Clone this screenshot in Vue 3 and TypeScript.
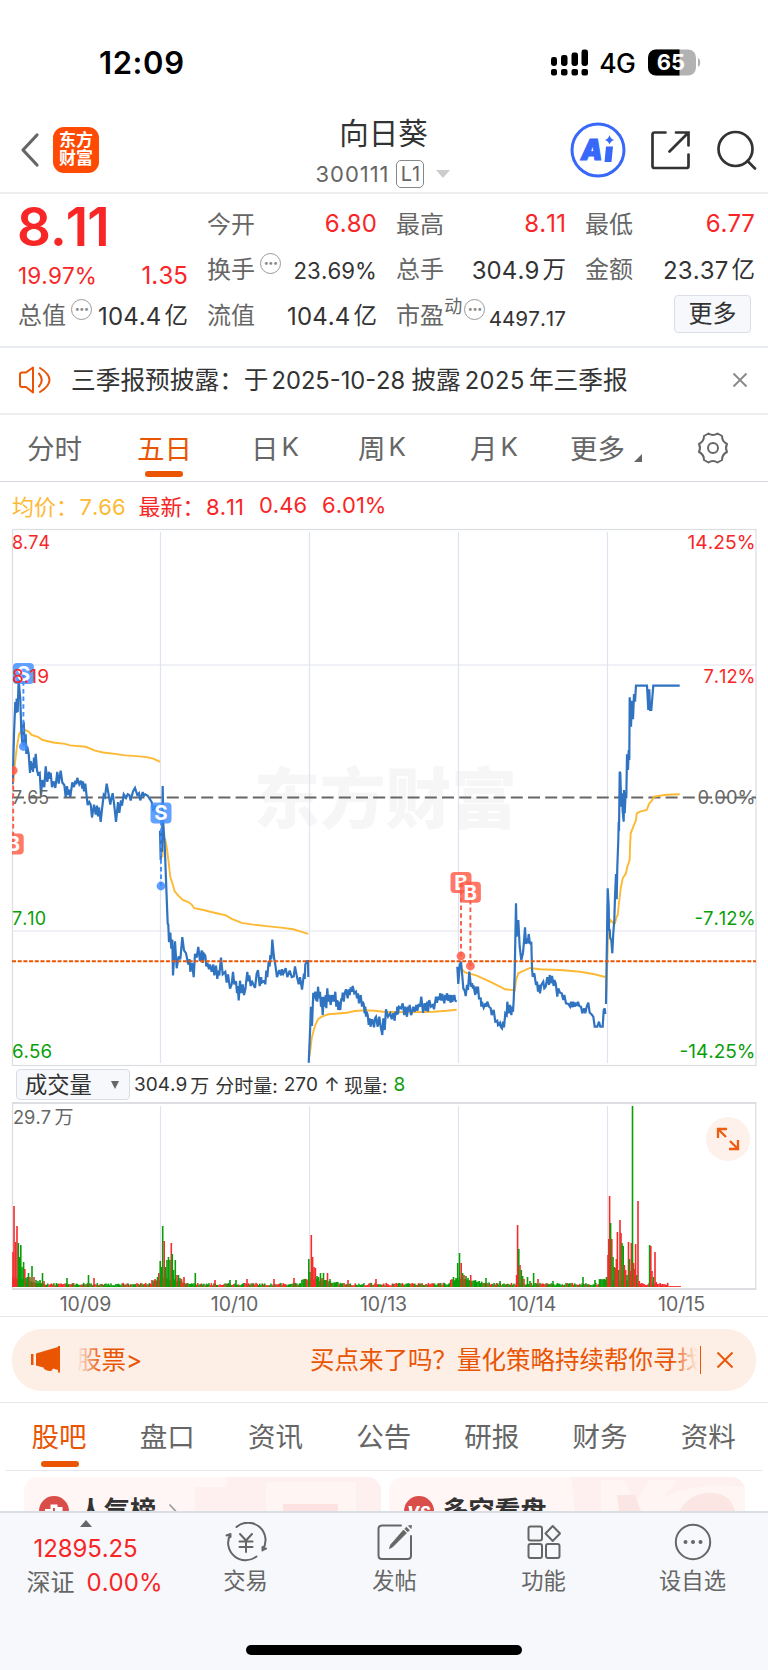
<script setup lang="ts">
type Point = [number, number]
interface Frame { ox: number; oy: number; sx: number; sy: number }

const early: Frame = { ox: 0, oy: 520, sx: 3, sy: 2.8 }
const middle: Frame = { ox: 300, oy: 740, sx: 3, sy: 3 }
const late: Frame = { ox: 450, oy: 640, sx: 3, sy: 3 }

function parse(frame: Frame, data: string): Point[] {
  return data.trim().split(/\s+/).map((pair) => {
    const [x, y] = pair.split(',').map(Number)
    return [frame.ox + x / frame.sx, frame.oy + y / frame.sy] as Point
  })
}
function line(points: Point[]): string {
  return 'M' + points.map(([x, y]) => `${x.toFixed(1)} ${y.toFixed(1)}`).join('L')
}

const prices: string[] = [
  line(parse(early, '38,740 42,600 46,510 48,540 50,500 53,538 56,440 58,470 61,500 64,590 67,625 69,590 71,565 74,630 77,600 79,655 82,635 86,655 90,708 92,675 95,700 97,680 99,705 102,665 104,695 107,655 111,700 114,712 119,708 123,770 127,728 130,742 133,748 137,690 142,733 147,705 149,725 152,708 156,748 161,732 166,750 172,705 176,738 182,702 187,735 193,742 197,775 201,745 205,770 208,755 211,775 217,735 222,748 226,730 229,740 232,722 238,740 243,730 247,752 249,732 252,760 256,738 260,775 263,798 268,790 272,797 276,833 282,797 287,825 291,800 294,830 297,805 302,845 306,810 311,770 315,775 320,738 326,770 331,797 334,780 338,765 343,800 348,845 354,790 358,820 363,785 366,800 371,768 378,778 383,768 388,770 392,785 399,760 405,750 412,770 417,765 421,785 428,762 432,772 436,768 443,772 450,782 455,790 460,815 465,800 470,820 475,805 480,820')),
  line(parse(early, '480,870 482,952 484,880 486,930 488,745 490,850 492,880 494,910 497,985 500,1060 503,1130 505,1133 507,1182 511,1155 514,1200 517,1175 519,1275 525,1180 530,1255 536,1222 541,1230 547,1168 552,1205 558,1213 565,1245 569,1230 571,1265 576,1240 581,1280 585,1215 590,1225 595,1195 600,1235 605,1205 608,1240 612,1215 616,1220 619,1250 622,1240 627,1258 630,1245 635,1265 640,1245 643,1275 648,1248 652,1285 655,1262 658,1275 663,1225 668,1272 676,1265 680,1295 684,1272 690,1312 695,1300 699,1265 703,1300 708,1292 711,1325 713,1305 716,1345 720,1290 724,1325 728,1300 732,1330 736,1315 742,1265 745,1292 748,1275 752,1305 755,1290 760,1300 765,1310 770,1270 774,1260 779,1305 783,1280 786,1295 793,1290 796,1300 799,1262 802,1280 806,1235 809,1250 811,1218 814,1230 817,1175 822,1225 826,1245 831,1280 838,1260 843,1275 846,1258 850,1270 857,1255 862,1280 869,1262 875,1280 881,1278 885,1250 891,1280 896,1300 900,1280 906,1315 912,1270 914,1285 916,1245 921,1235 924,1235 925,1280')),
  line(parse(middle, '26,968 29,900 33,800 36,858 40,758 43,775 46,755 48,782 50,755 52,785 54,740 58,775 60,755 63,800 65,770 68,825 71,770 74,800 77,765 79,805 82,745 85,785 88,765 92,795 95,765 98,785 101,765 103,785 106,755 109,800 112,780 115,810 118,785 121,810 124,775 126,780 128,758 131,785 134,760 138,748 143,775 146,748 149,765 152,742 155,755 158,738 163,760 168,755 171,775 174,760 177,790 182,765 186,800 188,785 191,792 194,820 196,800 198,830 200,815 203,825 206,855 208,835 212,860 214,840 217,840 222,862 225,835 228,830 233,860 238,830 242,860 247,885 250,835 254,870 258,808 264,830 271,820 275,838 280,820 284,842 286,815 290,825 292,800 294,822 297,800 303,805 308,790 313,825 316,800 321,830 324,800 326,815 329,795 333,825 335,820 340,800 344,815 349,795 352,812 356,792 360,800 364,770 369,818 374,790 378,812 382,785 384,815 388,780 393,800 398,795 402,808 408,770 411,788 414,770 417,780 421,760 424,782 427,762 433,790 436,765 439,780 441,760 445,782 448,765 452,788 455,765 457,785 463,765 466,782 470,785')),
  line([
    ...parse(middle, '472,680 475,732 479,675 483,665 487,708 490,745 494,752 497,768 501,735 504,750 508,695 513,740 516,730 518,742 521,740 526,765 528,740 531,760 534,740 537,775 542,775 544,800 546,785 551,803 557,790 559,800 562,785 567,800 572,805 575,825 581,810 586,845 592,842 594,855 600,848 602,860 606,865 609,845 612,862 616,820 620,825 622,785 626,820 630,795 634,825 637,800 639,815 641,780 644,700 646,600 648,490 650,590 653,560 655,540 659,620 664,660 669,638 672,605 675,562 678,612 681,595 683,610 686,582 690,612 694,605 696,685'),
    ...parse(late, '248,1010 253,1000 258,1035 261,1025 264,1055 267,1035 270,1060 274,1035 280,1025 283,1045 287,1040 292,1012 297,1035 299,1005 302,1030 306,1008 311,1038 313,1020 317,1030 322,1070 325,1045 330,1058 335,1060 340,1080 343,1065 348,1090 355,1092 360,1100 363,1085 367,1102 370,1085 374,1100 378,1088 381,1098 384,1085 388,1098 393,1100 397,1120 402,1105 406,1120 410,1100 415,1088 419,1118 424,1122 430,1130 434,1160 442,1160 447,1145 451,1160 458,1160 461,1110 464,1105 466,1122'),
  ]),
  line(parse(late, '468,1092 470,950 473,745 476,800 477,870 479,870 481,895 484,900 487,940 490,880 493,840 495,770 498,702 500,778 502,680 505,600 506,545 507,572 509,395 511,400 514,500 516,460 518,515 521,545 522,450 524,520 527,455 529,475 531,343 534,390 536,330 538,360 539,172 541,200 543,260 546,182 549,238 552,162 555,185 558,137 591,137 595,210 598,148 600,210 604,210 610,137 689,137')),
]

const averages: string[] = [
  line(parse(early, '40,735 45,680 50,640 57,600 64,590 75,588 85,592 95,602 115,608 128,616 160,623 195,627 210,631 257,635 285,646 310,651 345,655 375,659 410,661 440,664 460,668 480,677')),
  line(parse(early, '487,945 490,900 496,895 500,915 506,960 511,1000 518,1020 524,1040 535,1052 548,1064 565,1070 575,1077 583,1087 610,1092 640,1099 678,1107 695,1117 725,1128 760,1133 800,1137 850,1142 880,1146 905,1153 925,1159')),
  line(parse(middle, '28,950 31,930 35,895 40,875 46,855 54,838 65,830 85,823 105,821 140,818 165,813 195,811 225,812 250,815 280,816 330,817 400,815 440,812 470,809')),
  line(parse(late, '33,985 45,997 60,1001 80,1007 100,1016 120,1025 150,1040 165,1048 195,1051 198,1020 205,1000 215,995 240,984 270,988 330,990 390,995 430,1002 466,1011')),
  line(parse(late, '469,1060 474,900 478,850 482,840 490,850 495,850 500,830 503,825 508,780 512,745 518,715 528,700 532,680 539,660 540,620 542,580 550,560 558,540 560,520 570,515 590,510 598,490 605,483 612,470 625,468 650,464 689,463')),
]

interface Bar { x: number; h: number; up: boolean }
const peaks = '13,35,r 14,81,r 15.5,45,r 17,61,r 18.3,44,g 19.6,30,g 20.8,42,g 22,20,g 23.6,25,g 24.8,18,r 26,9,g 27.3,10,g 28.5,14,g 30,10,r 32,21,g 34,10,r 36,7,g 38,6,g 40,7,g 42.5,14,g 44,6,r 67,9,g 88.5,12,g 94,9,r 152,7,r 155,8,r 157.5,10,g 158.8,14,r 160.2,26,g 161.5,20,g 162.7,61,g 164.2,46,r 165.6,20,g 167,27,g 168.5,30,g 170,27,g 171.3,44,r 172.3,33,g 173.5,17,g 175.3,27,g 177,12,r 178.5,12,g 180,9,g 181.5,8,r 184,10,r 195.3,14,g 215,7,r 230,7,g 236,7,g 247,8,r 274,8,r 294,9,r 305,8,g 308.8,28,g 310,15,g 311.3,52,r 312.6,30,r 314,20,r 315.4,19,r 317,11,g 318.5,10,g 320.5,14,g 322,9,r 323.5,14,g 327.5,14,r 330,8,g 348,7,r 376,8,r 453.5,10,g 456,9,g 457.7,24,g 459.5,34,g 461.2,24,r 462.6,14,g 464,12,r 466,11,g 468,9,g 470.7,12,r 486,9,g 500,6,g 516.6,12,r 517.6,62,r 518.8,38,g 520,22,r 521.3,17,g 522.6,11,g 524,8,r 527.5,10,g 530,6,g 533.6,14,g 538,8,r 553,6,g 583,10,g 595,7,g 606.5,10,g 608,32,r 608.8,48,r 609.6,91,r 610.6,64,g 611.8,48,r 613,30,g 614.2,20,g 615.5,19,r 616.4,28,r 617.4,55,r 618.7,17,g 620,67,r 621,54,r 622,44,g 623.2,41,g 624.4,22,r 625.6,17,r 627,12,g 628.5,45,r 629.5,28,g 630.5,16,r 631.3,44,r 632.5,181,g 633.6,24,r 634.7,18,r 635.6,43,r 636.8,12,g 638,86,r 639.3,6,r 649.6,42,g 650.8,41,r 652,16,r 653.4,10,g 655,35,r 656.2,5,r'

function volumeBars(): Bar[] {
  const bars: Bar[] = []
  let seed = 29
  for (let x = 13; x < 681; x += 1.24) {
    seed = (seed * 1103515245 + 12345) % 2147483648
    const level = seed / 2147483648
    const phase = ((x - 12) % 149) / 149
    const boost = phase < 0.22 ? 6 * (1 - phase / 0.22) : phase > 0.94 ? 4 : 0
    const h = x > 668 ? 0.9 : 1.6 + level * 2.6 + (x > 657 ? 0 : boost)
    bars.push({ x, h, up: (seed >> 9) % 5 < 2 || x > 640 })
  }
  for (const item of peaks.split(' ')) {
    const [x, h, tone] = item.split(',')
    bars.push({ x: Number(x), h: Number(h), up: tone === 'r' })
  }
  return bars
}
const bars = volumeBars()

const verticals = [160.5, 309.5, 458.5, 607.5]
const leftLabels = [
  { text: '8.74', y: 548.5, w: 38, tone: 'up' },
  { text: '8.19', y: 683, w: 37, tone: 'up' },
  { text: '7.65', y: 803.5, w: 37, tone: 'flat' },
  { text: '7.10', y: 925, w: 34, tone: 'down' },
  { text: '6.56', y: 1058, w: 40, tone: 'down' },
]
const rightLabels = [
  { text: '14.25%', y: 548.5, w: 68, tone: 'up' },
  { text: '7.12%', y: 683, w: 52, tone: 'up' },
  { text: '0.00%', y: 803.5, w: 58, tone: 'flat' },
  { text: '-7.12%', y: 925, w: 61, tone: 'down' },
  { text: '-14.25%', y: 1058, w: 76, tone: 'down' },
]
const markers = [
  { kind: 'S', x: 23.4, y: 673.5, end: 746.5 },
  { kind: 'S', x: 161, y: 813, end: 886 },
  { kind: 'B', x: 13.2, y: 844, end: 770.5 },
  { kind: 'B', x: 461, y: 882.5, end: 956 },
  { kind: 'B', x: 470.4, y: 892.2, end: 966 },
]
const dates = ['10/09', '10/10', '10/13', '10/14', '10/15']
const infoTabs = ['股吧', '盘口', '资讯', '公告', '研报', '财务', '资料']
</script>

<template>
  <main class="app">
    <div class="status">
      <span class="clock">12:09</span>
      <svg class="signal" width="38" height="27" viewBox="0 0 38 27">
        <g fill="#000">
          <rect x="0" y="8" width="6" height="9" rx="2.4" /><rect x="10" y="6" width="6.5" height="11" rx="2.4" />
          <rect x="20.5" y="3.5" width="6.5" height="13.5" rx="2.4" /><rect x="30.5" y="0.5" width="6.5" height="16.5" rx="2.4" />
          <rect x="0" y="20" width="6" height="6.5" rx="2" /><rect x="10" y="20" width="6.5" height="6.5" rx="2" />
          <rect x="20.5" y="20" width="6.5" height="6.5" rx="2" /><rect x="30.5" y="20" width="6.5" height="6.5" rx="2" />
        </g>
      </svg>
      <span class="network">4G</span>
      <svg class="battery" width="53" height="27" viewBox="0 0 53 27">
        <rect x="0" y="0.5" width="48" height="26" rx="8" fill="#b2b2b2" />
        <path d="M8 .5H31.5V26.5H8A8 8 0 0 1 0 18.500V8.500A8 8 0 0 1 8 .5Z" fill="#000" />
        <path d="M50 9C53 10.500 53 16.500 50 18Z" fill="#b2b2b2" />
        <text x="23" y="21.300" text-anchor="middle" font-size="22" font-weight="700" fill="#fff">65</text>
      </svg>
    </div>

    <header class="header">
      <svg class="back" width="20" height="36" viewBox="0 0 20 36"><path d="M17 3 3 18 17 33" fill="none" stroke="#666" stroke-width="3.200" stroke-linecap="round" stroke-linejoin="round" /></svg>
      <div class="logo"><span>东方</span><span>财富</span></div>
      <div class="title">
        <h1>向日葵</h1>
        <div class="code"><span>300111</span><b>L1</b><i></i></div>
      </div>
      <svg class="ai" width="56" height="56" viewBox="0 0 56 56">
        <circle cx="28" cy="28" r="26" fill="none" stroke="#3768fa" stroke-width="3" />
        <text class="ai-letter" x="11" y="38" textLength="21.500" lengthAdjust="spacingAndGlyphs">A</text>
        <path d="M36 24.500H43L41.500 40H34.500Z" fill="#3768fa" />
        <path d="M39.500 13Q40.500 17 44 18Q40.500 19 39.500 22.500Q38.500 19 35 18Q38.500 17 39.500 13Z" fill="#3768fa" />
      </svg>
      <svg class="share" width="42" height="42" viewBox="0 0 42 42" fill="none" stroke="#333" stroke-width="2.700" stroke-linecap="round">
        <path d="M15.500 3.500H4.500Q2.500 3.500 2.500 5.500V37Q2.500 39 4.500 39H36.500Q38.500 39 38.500 37V25.500M26 3.500H38.500V16.500M38 4 19.500 22.500" />
      </svg>
      <svg class="search" width="42" height="42" viewBox="0 0 42 42" fill="none" stroke="#333" stroke-width="2.700" stroke-linecap="round">
        <circle cx="19.500" cy="20" r="17" /><path d="M31.500 32 39 39.500" />
      </svg>
    </header>

    <section class="quote">
      <div class="cell"><strong>8.11</strong></div>
      <div class="cell top"><label>今开</label><span class="up">6.80</span></div>
      <div class="cell top"><label>最高</label><span class="up">8.11</span></div>
      <div class="cell top"><label>最低</label><span class="up">6.77</span></div>
      <div class="cell change"><span class="up pct">19.97%</span><span class="up">1.35</span></div>
      <div class="cell second"><label>换手<em class="tip">•••</em></label><span class="mid">23.69%</span></div>
      <div class="cell second"><label>总手</label><span>304.9<u>万</u></span></div>
      <div class="cell second"><label>金额</label><span>23.37<u>亿</u></span></div>
      <div class="cell"><label>总值<em class="tip">•••</em></label><span>104.4<u>亿</u></span></div>
      <div class="cell"><label>流值</label><span>104.4<u>亿</u></span></div>
      <div class="cell"><label>市盈<sup>动</sup><em class="tip tight">•••</em></label><span class="small">4497.17</span></div>
      <div class="cell last"><button class="more">更多</button></div>
    </section>

    <section class="notice">
      <svg width="34" height="30" viewBox="0 0 34 30" fill="none" stroke="#ea5504" stroke-width="2" stroke-linejoin="round" stroke-linecap="round">
        <path d="M15 2.500V27.500L8 22H4Q2 22 2 20V9.500Q2 7.500 4 7.500H8Z" /><path d="M21 8.500Q26.500 15 21 21.500M22 3Q41 15 22 27" />
      </svg>
      <p>三季报预披露：于<span>2025-10-28</span>披露<span class="year">2025</span>年三季报</p>
      <svg width="16" height="16" viewBox="0 0 16 16"><path d="M1.500 1.500 14.500 14.500M14.500 1.500 1.500 14.500" stroke="#888" stroke-width="1.800" /></svg>
    </section>

    <nav class="periods">
      <span>分时</span><span class="active">五日</span><span>日<b>K</b></span><span>周<b>K</b></span><span>月<b>K</b></span>
      <span class="drop">更多<i></i></span>
      <svg width="34" height="34" viewBox="0 0 34 34" fill="none" stroke="#666" stroke-width="2">
        <path d="M12.500 2.500Q17 5.500 21.500 2.500L26 5Q26 10.500 31 13Q29 17 31 21Q26 23.500 26 29L21.500 31.500Q17 28.500 12.500 31.500L8 29Q8 23.500 3 21Q5 17 3 13Q8 10.500 8 5Z" stroke-linejoin="round" /><circle cx="17" cy="17" r="5" />
      </svg>
    </nav>

    <p class="legend"><span class="avg">均价：<b>7.66</b></span><span>最新：<b>8.11</b></span><b>0.46</b><b>6.01%</b></p>

    <svg class="chart" width="768" height="543" viewBox="0 524 768 543">
      <defs><clipPath id="plot"><rect x="12" y="529" width="744.500" height="537" /></clipPath></defs>
      <text class="watermark" x="254" y="823" textLength="263" lengthAdjust="spacingAndGlyphs">东方财富</text>
      <g stroke="#dfe3ef" stroke-width="1.200" fill="none">
        <rect x="12.500" y="529.500" width="743.500" height="536" stroke="#dadde2" />
        <path v-for="x in verticals" :key="x" :d="`M${x} 532V1063`" />
        <path d="M12 665H756M12 931H756" />
      </g>
      <path d="M12 797.500H756" stroke="#666" stroke-width="2" stroke-dasharray="12 5.200" />
      <g clip-path="url(#plot)" fill="none" stroke-linejoin="miter" stroke-miterlimit="3">
        <path v-for="d in averages" :key="d" :d="d" stroke="#fdb933" stroke-width="1.900" />
        <path v-for="d in prices" :key="d" :d="d" stroke="#2f73c1" stroke-width="2.200" />
        <path d="M12 961.300H756" stroke="#ea5504" stroke-width="2" stroke-dasharray="4 1.700" />
        <g v-for="m in markers" :key="m.x" :class="m.kind === 'S' ? 'sell' : 'buy'">
          <path class="stem" :d="`M${m.x} ${m.y}V${m.end}`" />
          <circle :cx="m.x" :cy="m.end" r="4.400" />
          <rect :x="m.x - 10.500" :y="m.y - 10.500" width="21" height="21" rx="4" />
          <text :x="m.x" :y="m.y + 7.300" text-anchor="middle">{{ m.kind }}</text>
        </g>
      </g>
      <g class="axis">
        <text v-for="l in leftLabels" :key="l.text" x="12" :y="l.y" :textLength="l.w" lengthAdjust="spacingAndGlyphs" :class="l.tone">{{ l.text }}</text>
        <text v-for="l in rightLabels" :key="l.text" :x="755.500 - l.w" :y="l.y" :textLength="l.w" lengthAdjust="spacingAndGlyphs" :class="l.tone">{{ l.text }}</text>
      </g>
    </svg>

    <div class="volume-head">
      <button>成交量<i></i></button>
      <p>304.9<u>万</u><span>分时量:</span><span>270</span><span>↑</span><span class="now">现量:</span><span class="down">8</span></p>
    </div>

    <div class="volume">
      <svg width="768" height="188" viewBox="0 1102 768 188">
        <g stroke="#dfe3ef" stroke-width="1.200" fill="none">
          <path v-for="x in verticals" :key="x" :d="`M${x} 1106V1287`" />
          <path d="M12.500 1103V1288M755.800 1103V1288" stroke="#dadde2" />
          <path d="M12 1103H756.500M12 1289H756.500" stroke="#dcdee2" stroke-width="2" />
        </g>
        <rect v-for="(b, i) in bars" :key="i" :x="b.x - 0.800" :y="1287 - b.h" width="1.600" :height="b.h" :fill="b.up ? '#f62c2c' : '#0a9d08'" />
        <text class="volume-max" x="13" y="1124" textLength="38" lengthAdjust="spacingAndGlyphs">29.7</text>
        <text class="volume-max" x="54.500" y="1124" font-size="18">万</text>
      </svg>
      <div class="expand">
        <svg width="24" height="24" viewBox="0 0 24 24" fill="none" stroke="#ee5c10" stroke-width="2.300"><path d="M2 11V2H11M2.500 2.500 10 10M22 13V22H13M21.500 21.500 14 14" /></svg>
      </div>
    </div>
    <div class="dates"><span v-for="d in dates" :key="d">{{ d }}</span></div>

    <section class="promo">
      <svg width="30" height="28" viewBox="0 0 30 28" fill="#ea5504"><path d="M0 8H2.500V19H0ZM5 7.500 27 1V0H29V26.500H27V24L22 22.500Q21 25.500 18.500 25Q13 24 12.500 21.500L5 19.500Z" /></svg>
      <div class="ticker"><span>股票&gt;</span><span>买点来了吗？量化策略持续帮你寻找</span></div>
      <svg class="promo-close" width="18" height="18" viewBox="0 0 18 18"><path d="M1.500 1.500 16.500 16.500M16.500 1.500 1.500 16.500" stroke="#ea5504" stroke-width="1.900" /></svg>
    </section>

    <nav class="info-tabs"><span v-for="(t, i) in infoTabs" :key="t" :class="{ active: i === 0 }">{{ t }}</span></nav>

    <section class="cards">
      <article>
        <svg width="30" height="30" viewBox="0 0 30 30"><circle cx="15" cy="15" r="15" fill="#da4e49" /><path d="M6 13H11.500V8.500H18.500V11H23.500V25H6Z" fill="#fff" /><path d="M14 12H16V21H14Z" fill="#da4e49" /></svg>
        <h2>人气榜</h2>
        <svg class="arrow" width="10" height="18" viewBox="0 0 10 18"><path d="M1.500 1.500 8.500 9 1.500 16.500" fill="none" stroke="#999" stroke-width="1.600" /></svg>
        <svg class="deco" width="186" height="50" viewBox="0 0 186 50"><path d="M0 10H32V0H186V50H0Z" fill="#fef0ee" /><path d="M71 5H161V50H71Z" fill="#fff6f4" /><path d="M88 27H143V50H88Z" fill="#fce3e2" /></svg>
      </article>
      <article>
        <svg width="30" height="30" viewBox="0 0 30 30"><circle cx="15" cy="15" r="15" fill="#da4e49" /><text x="14.500" y="21.500" text-anchor="middle" font-size="16" font-weight="800" font-style="italic" fill="#fff">VS</text></svg>
        <h2>多空看盘</h2>
        <svg class="deco" width="174" height="50" viewBox="0 0 174 50"><path d="M0 0H174V50H6Z" fill="#fef0ee" /><path d="M30 3H54L64 26 78 3H106L90 22Q122 4 174 10V34H30Z" fill="#fff6f4" /><path d="M46 18H64L70 34H48ZM108 34Q120 14 144 16Q160 18 164 34Z" fill="#fce6e4" /></svg>
      </article>
    </section>

    <footer class="bottom">
      <div class="tabs">
        <div class="index"><i></i><b>12895.25</b><p>深证<span>0.00%</span></p></div>
        <a>
          <svg width="44" height="40" viewBox="0 0 44 40" fill="none" stroke="#666" stroke-width="2" stroke-linecap="round" stroke-linejoin="round"><path d="M12.500 5A17.500 17.500 0 0 1 38.500 28L42 26.500M38.500 28.500V25M32.500 34.500A17.500 17.500 0 0 1 6.500 12L2.500 13.500M6.500 12V15" /><path d="M16 12 22 18.500 28 12M22 18.500V30M15.500 19.500H28.500M15.500 25H28.500" /></svg>
          <span>交易</span>
        </a>
        <a>
          <svg width="44" height="40" viewBox="0 0 44 40"><path d="M28 3.500H9Q5.500 3.500 5.500 7V33.500Q5.500 37 9 37H34.500Q38 37 38 33.500V14" fill="none" stroke="#666" stroke-width="2" stroke-linecap="round" /><path d="M30.500 8 33.500 11 19.500 25 16.500 26.500 17.500 23ZM31.800 6.800 34.800 9.800 36.300 8.300 33.500 5.200ZM35.500 3.800 38 6.500 38.500 3.500Z" fill="#666" stroke="#666" stroke-width="0.800" stroke-linejoin="round" /></svg>
          <span>发帖</span>
        </a>
        <a>
          <svg width="44" height="40" viewBox="0 0 44 40" fill="none" stroke="#666" stroke-width="2" stroke-linejoin="round"><rect x="6.500" y="4.500" width="13.500" height="14" rx="2" /><rect x="6.500" y="22" width="13.500" height="14" rx="2" /><rect x="24" y="22" width="13.500" height="14" rx="2" /><path d="M30.700 4 38 11.500 30.700 19 23.500 11.500Z" /></svg>
          <span>功能</span>
        </a>
        <a>
          <svg width="44" height="40" viewBox="0 0 44 40"><circle cx="22" cy="20" r="17.200" fill="none" stroke="#666" stroke-width="2" /><g fill="#666"><circle cx="14.500" cy="20" r="2" /><circle cx="22" cy="20" r="2" /><circle cx="29.500" cy="20" r="2" /></g></svg>
          <span>设自选</span>
        </a>
      </div>
      <div class="home"></div>
    </footer>
  </main>
</template>

<style>
body { margin: 0; background: #fff; }
</style>

<style scoped>
* { box-sizing: border-box; }
p, h1, h2 { margin: 0; }
svg { display: block; flex: none; }
i, em { font-style: normal; }
u { text-decoration: none; }
.app {
  width: 768px; height: 1670px; overflow: hidden; display: flex; flex-direction: column;
  font-family: Inter, "Noto Sans CJK SC", sans-serif; color: #333; white-space: nowrap; font-kerning: none;
}
.app > * { flex: none; }
.up { fill: #f82626; color: #f82626; }
.down { fill: #0a9d08; color: #0a9d08; }
.flat { fill: #666; }

.status { height: 100px; display: flex; align-items: center; padding: 25px 67px 0 99px; color: #000; }
.clock { width: 454px; font-size: 31px; font-weight: 600; letter-spacing: 0.6px; }
.network { width: 48px; margin-left: 10px; font-size: 26.500px; font-weight: 450; letter-spacing: -0.6px; margin-top: 1px; margin-right: 1px; }

.header { height: 94px; display: flex; align-items: center; border-bottom: 2px solid #eee; padding: 7px 10px 0 20px; }
.logo {
  width: 46px; height: 46px; margin: 0 auto 0 13px; border-radius: 11px; background: #ff4a03; color: #fff; font-size: 17px; line-height: 18px;
  font-weight: 700; display: flex; flex-direction: column; align-items: center; justify-content: center; padding-bottom: 1px;
}
.title { width: 160px; margin: 2px 106px 0 0; display: flex; flex-direction: column; align-items: center; }
h1 { font-size: 29.500px; line-height: 38px; font-weight: 400; margin-right: 1px; }
.code { display: flex; align-items: center; font-size: 22px; line-height: 28px; color: #666; margin: 8px 2px 0 0; }
.code span { letter-spacing: 0.95px; }
.code b { width: 28px; height: 28px; margin-left: 7px; border: 1.500px solid #888; border-radius: 5px; font-weight: 400; font-size: 20px; line-height: 26px; text-align: center; }
.code i { margin-left: 12px; border: 7px solid transparent; border-top: 8px solid #ccc; border-bottom: 0; }
.ai { margin-right: 24px; }
.ai-letter { font-size: 29px; font-weight: 900; font-style: italic; fill: #3768fa; stroke: #3768fa; stroke-width: 1.200px; }
.share { margin-right: 24px; }

.quote { height: 154px; display: grid; grid-template: 47px 45.500px 45px / repeat(4, 170px); gap: 0 19px; padding: 6px 0 0 18px; border-bottom: 2px solid #e9ecf1; font-size: 24px; letter-spacing: 0.1px; }
.cell { display: flex; align-items: center; justify-content: space-between; height: 45px; }
.cell label { color: #666; display: flex; align-items: center; margin-top: -3px; }
.cell u { margin-left: 3px; font-size: 23.500px; position: relative; top: -1px; }
.cell.top { padding-top: 2px; }
.cell.second { margin-top: -1px; }
.quote strong { font-size: 53px; line-height: 46px; font-weight: 600; color: #f82626; letter-spacing: -1px; margin: 8px 0 0 -1px; }
.change { padding-top: 12px; }
.pct { font-size: 22.500px; }
.quote .mid { font-size: 22.200px; margin-top: 4px; }
.quote .small { font-size: 20.700px; margin-top: 6px; letter-spacing: 0; }
.tip { width: 21px; height: 21px; border: 1.800px solid #999; border-radius: 50%; margin: -8px 0 0 5px; color: #888; font-size: 9px; line-height: 17px; text-align: center; letter-spacing: -0.4px; }
.tip.tight { margin-left: 2px; }
.quote sup { font-size: 18px; line-height: 20px; margin: -14px 0 0 0; }
.cell.last { justify-content: flex-end; }
.more { width: 77px; height: 38px; margin: -2px 4px 0 0; padding: 0; border: 1px solid #dadee6; border-radius: 4px; background: #f6f8fb; color: #333; font: inherit; line-height: 34px; }

.notice { height: 67px; display: flex; align-items: center; padding: 0 20px 2px 18px; border-bottom: 2px solid #eee; }
.notice p { flex: 1; margin: -4px 0 0 19px; font-size: 24.700px; }
.notice p span { margin: 0 6px 0 3px; font-size: 23.700px; }
.notice p .year { margin: 0 4px; letter-spacing: 0.5px; }

.periods { height: 67px; position: relative; display: flex; align-items: center; font-size: 27.500px; color: #666; border-bottom: 1.500px solid #d5dae1; padding-left: 27px; }
.periods span { display: flex; align-items: center; width: 107px; height: 66px; padding-bottom: 3px; }
.periods span:first-child { width: 110px; }
.periods span:nth-child(2) { width: 114px; }
.periods span:nth-child(4) { width: 112px; }
.periods span:nth-child(5) { width: 100px; }
.periods b { font-weight: 400; margin-left: 3px; font-size: 26px; }
.active { color: #ea5504; position: relative; }
.active::after { content: ""; position: absolute; left: 8px; bottom: 4px; width: 38px; height: 6px; border-radius: 3px; background: #ea5504; }
.periods .drop { width: 126px; }
.drop i { margin: 23px 0 0 9px; border-left: 8px solid transparent; border-bottom: 8px solid #666; }

.legend { height: 42px; display: flex; align-items: center; padding: 4px 0 0 12px; font-size: 22px; color: #f82626; }
.legend b { font-weight: 400; margin-right: 15px; }
.legend .avg { color: #fdb933; }
.legend .avg b { margin-right: 13px; }
.legend span b { margin-left: 1.500px; }

.chart text { stroke: none; }
.watermark { font-family: "Noto Sans CJK SC", sans-serif; font-size: 66px; font-weight: 900; fill: #f6f6f6; }
.axis text { font-size: 18.700px; }
.sell { stroke: #3f8cff; fill: #3f8cff; }
.buy { stroke: #ff5a47; fill: #ff5a47; }
.sell rect, .buy rect { stroke: none; fill-opacity: 0.82; }
.sell circle, .buy circle { stroke: none; fill-opacity: 0.85; }
.sell text, .buy text { fill: #fff; font-size: 20.500px; font-weight: 700; }
.stem { stroke-width: 1.900; stroke-dasharray: 4.500 3.200; }

.volume-head { height: 35px; display: flex; align-items: center; padding-left: 16px; }
.volume-head button { width: 114px; height: 31px; padding: 0 10px 0 8px; display: flex; align-items: center; justify-content: space-between; border: 1px solid #d8dce5; border-radius: 4px; background: #f6f8fb; color: #333; font: inherit; font-size: 22.300px; line-height: 28px; }
.volume-head i { border: 4.500px solid transparent; border-top: 8px solid #666; border-bottom: 0; }
.volume-head p { display: flex; align-items: center; margin-left: 4px; font-size: 19px; }
.volume-head u { margin-left: 3px; }
.volume-head p span { margin-left: 6px; }
.volume-head p .now { margin-left: 4px; }

.volume { position: relative; height: 188px; }
.volume-max { font-size: 19px; fill: #666; }
.expand { position: absolute; right: 18px; top: 15px; width: 44px; height: 44px; border-radius: 50%; background: #fef1eb; display: flex; align-items: center; justify-content: center; }
.dates { height: 27px; display: grid; grid-template-columns: repeat(5, 149px); padding-left: 11px; font-size: 19.500px; line-height: 28px; color: #666; text-align: center; border-bottom: 1px solid #e5e7ea; }

.promo { height: 62px; margin: 12px 12px 11px; border-radius: 30px; background: #fdeee6; color: #ea5504; display: flex; align-items: center; padding: 0 22px 0 19px; font-size: 24.500px; }
.ticker { height: 28px; line-height: 28px; flex: 1; display: flex; margin: 0 15px 0 16px; border-right: 1.500px solid #ea5504; overflow: hidden; position: relative; }
.ticker span { flex: none; }
.ticker span:first-child { width: 233px; }
.ticker::before { content: ""; position: absolute; inset: 0 auto 0 0; width: 24px; background: linear-gradient(90deg, #fdeee6, #fdeee600); }
.ticker::after { content: ""; position: absolute; inset: 0 0 0 auto; width: 28px; background: linear-gradient(270deg, #fdeee6 8%, #fdeee600); }

.info-tabs { position: relative; height: 69px; padding: 0 5px; display: grid; grid-template-columns: repeat(7, 108.200px); border-top: 1px solid #e5e7ea; font-size: 27.500px; line-height: 69px; color: #666; text-align: center; }
.info-tabs::after { content: ""; position: absolute; left: 6px; right: 6px; bottom: 0; height: 1px; background: #e5e7ea; }
.info-tabs .active { color: #ea5504; }
.info-tabs .active::after { left: 36px; bottom: 5px; }

.cards { height: 40px; padding: 6px 23px 0 24px; display: grid; grid-template-columns: 1fr 1fr; gap: 8px; overflow: hidden; }
.cards article { position: relative; height: 34px; border-radius: 14px 14px 0 0; background: #fff6f5; padding: 19px 15px; display: flex; align-items: flex-start; overflow: hidden; }
.cards h2 { position: relative; z-index: 1; margin-left: 9px; font-size: 26px; line-height: 30px; font-weight: 700; }
.arrow { margin: 7px 0 0 12px; }
.deco { position: absolute; right: 0; top: 0; }

.bottom { flex: 1 1 0 !important; background: #f6f8fb; border-top: 2px solid #d9dde4; display: flex; flex-direction: column; align-items: center; }
.tabs { width: 768px; height: 132px; display: grid; grid-template-columns: 171px repeat(4, 149px); }
.tabs a { display: flex; flex-direction: column; align-items: center; padding-top: 9px; font-size: 22.300px; line-height: 30px; color: #666; }
.tabs a span { margin-top: 4px; }
.index { display: flex; flex-direction: column; align-items: center; font-size: 24px; padding-top: 7px; }
.index i { border: 6.500px solid transparent; border-bottom: 7px solid #666; border-top: 0; }
.index b { font-weight: 400; color: #f82626; line-height: 30px; margin-top: 7px; letter-spacing: -0.1px; }
.index p { line-height: 30px; margin: 4px 0 0 18px; color: #666; }
.index p span { color: #f82626; margin-left: 12px; }
.home { width: 276px; height: 10px; border-radius: 5px; background: #000; }
</style>
